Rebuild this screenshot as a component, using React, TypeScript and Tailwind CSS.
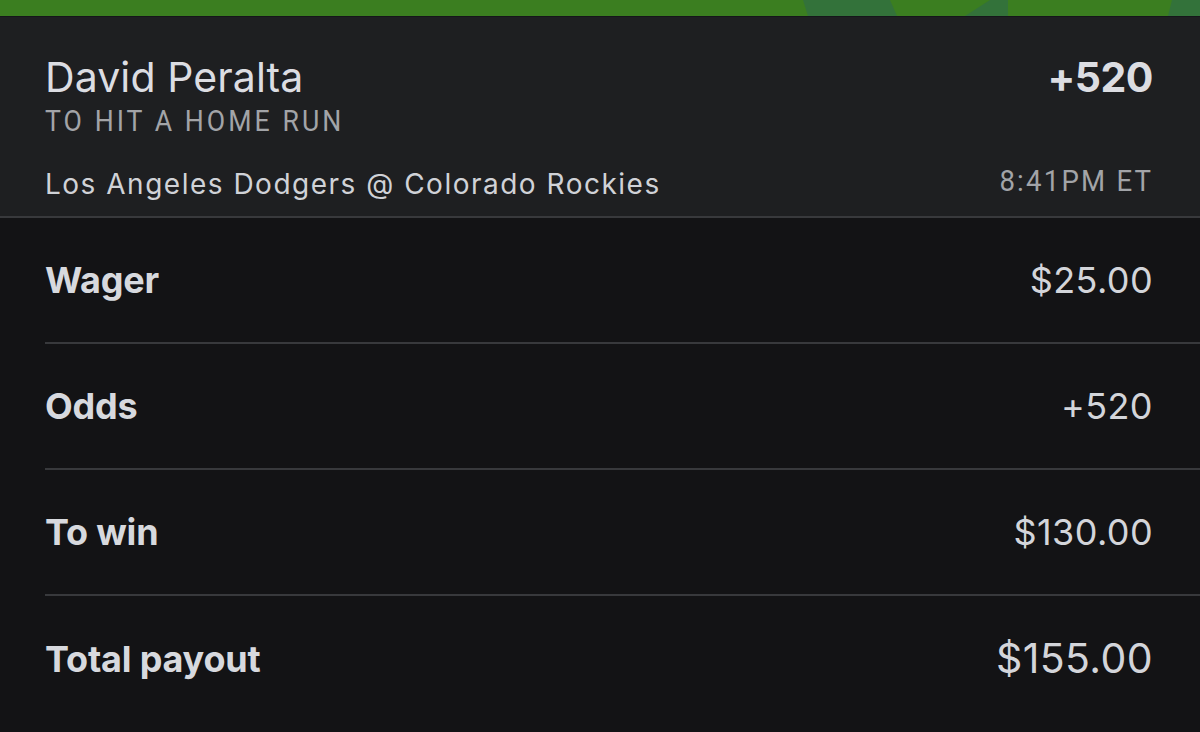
import React from "react";

type Row = { label: string; value: string; big?: boolean };

const rows: Row[] = [
  { label: "Wager", value: "$25.00" },
  { label: "Odds", value: "+520" },
  { label: "To win", value: "$130.00" },
  { label: "Total payout", value: "$155.00", big: true },
];

export default function App() {
  return (
    <div className="w-[1200px] h-[732px] overflow-hidden bg-[#131315] font-['Inter',sans-serif] text-[#d7d9de]">
      {/* green banner with faded shapes */}
      <div className="h-[16px] bg-[#3b7e20] relative overflow-hidden">
        <svg className="absolute inset-0" width="1200" height="16" viewBox="0 0 1200 16">
          <polygon points="803,0 890,0 897,16 808,16" fill="#33723a" />
          <polygon points="990,0 1008,0 1008,16 965,16" fill="#33723a" />
          <polygon points="1172,0 1200,0 1200,16 1168,16" fill="#33723a" />
        </svg>
      </div>
      <div className="h-[1px] bg-[#15161a]" />

      {/* header */}
      <div className="bg-[#1e1f21] border-b-2 border-[#38393c] h-[201px] pl-[45px] pr-[47px] pt-[40px]">
        <div className="flex justify-between items-start">
          <div className="text-[41px] leading-[41px] tracking-[0.1px] text-[#dcdde2]">David Peralta</div>
          <div className="text-[41px] leading-[41px] font-bold tracking-[-0.5px] text-[#dcdde2]">+520</div>
        </div>
        <div className="font-['Roboto',sans-serif] text-[29px] leading-[29px] tracking-[3.3px] text-[#a2a4a8] mt-[9px] scale-x-[0.92] origin-left">
          TO HIT A HOME RUN
        </div>
        <div className="flex justify-between items-start mt-[31px]">
          <div className="text-[28px] leading-[34px] tracking-[1.5px] text-[#d0d2d7]">Los Angeles Dodgers @ Colorado Rockies</div>
          <div className="font-['Roboto',sans-serif] text-[30px] leading-[28px] tracking-[2.4px] text-[#a2a4a8] scale-x-[0.92] origin-right">
            8:41PM ET
          </div>
        </div>
      </div>

      {/* rows */}
      <div className="pl-[45px]">
        {rows.map((r, i) => (
          <div
            key={r.label}
            className={"flex justify-between items-center h-[126px] pr-[47px] " + (i < rows.length - 1 ? "border-b-2 border-[#38393c]" : "")}
          >
            <div className="text-[36px] font-bold tracking-[-0.2px] text-[#d7d9de]">{r.label}</div>
            <div className={(r.big ? "text-[41px] tracking-[0.4px]" : "text-[36px] tracking-[0.4px]") + " text-[#d3d5da]"}>{r.value}</div>
          </div>
        ))}
      </div>
    </div>
  );
}
